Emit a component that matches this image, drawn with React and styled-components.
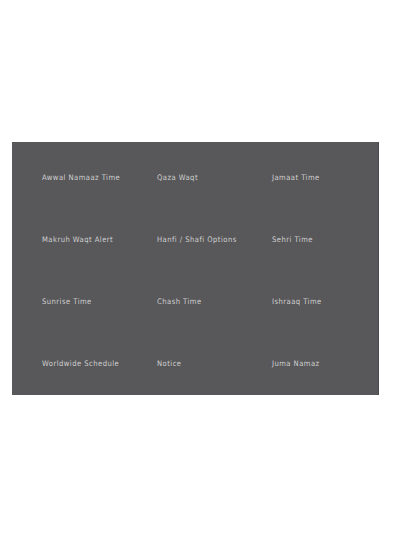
import React from "react";
import styled, { createGlobalStyle } from "styled-components";

const Global = createGlobalStyle`
  html, body { margin: 0; padding: 0; background: #ffffff; }
  body { width: 400px; height: 533px; }
`;

const Page = styled.div`
  width: 400px;
  height: 533px;
  padding: 142px 21px 0 12px;
  box-sizing: border-box;
`;

const Panel = styled.div`
  height: 253px;
  background: #58585a;
  border-right: 1px solid #4a4a4c;
  box-sizing: border-box;
  padding: 4px 0 0 30px;
  display: grid;
  grid-template-columns: 115px 115px 1fr;
  grid-auto-rows: 62px;
`;

const Item = styled.div`
  display: flex;
  align-items: center;
  font-family: "DejaVu Sans Condensed", "DejaVu Sans", sans-serif;
  font-size: 7.6px;
  letter-spacing: 0.45px;
  color: #cfcfd0;
  white-space: nowrap;
`;

const items = [
  "Awwal Namaaz Time", "Qaza Waqt", "Jamaat Time",
  "Makruh Waqt Alert", "Hanfi / Shafi Options", "Sehri Time",
  "Sunrise Time", "Chash Time", "Ishraaq Time",
  "Worldwide Schedule", "Notice", "Juma Namaz",
];

export default function App() {
  return (
    <>
      <Global />
      <Page>
        <Panel>
          {items.map((t) => (
            <Item key={t}>{t}</Item>
          ))}
        </Panel>
      </Page>
    </>
  );
}
